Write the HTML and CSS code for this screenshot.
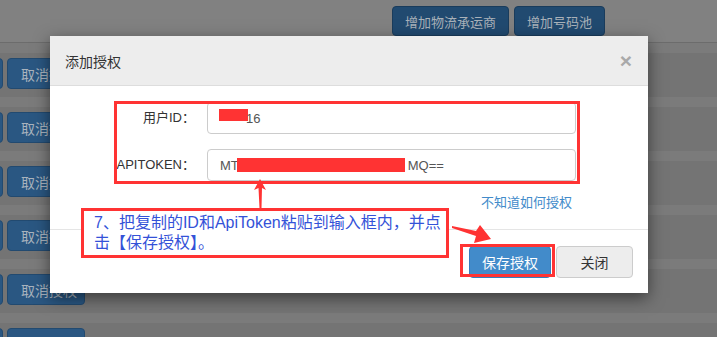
FILE: index.html
```html
<!DOCTYPE html>
<html>
<head>
    <meta charset="utf-8">
    <title>添加授权</title>
    <link rel="stylesheet" href="styles.css">
</head>
<body>
    <div class="page">
        <div class="topbar">
            <span class="btn btn-top">增加物流承运商</span>
            <span class="btn btn-top">增加号码池</span>
        </div>
        <div class="list">
            <div class="row"><span class="btn btn-row btn-cut"></span><span class="btn btn-row">取消授权</span></div>
            <div class="row"><span class="btn btn-row btn-cut"></span><span class="btn btn-row">取消授权</span></div>
            <div class="row"><span class="btn btn-row btn-cut"></span><span class="btn btn-row">取消授权</span></div>
            <div class="row"><span class="btn btn-row btn-cut"></span><span class="btn btn-row">取消授权</span></div>
            <div class="row"><span class="btn btn-row btn-cut"></span><span class="btn btn-row">取消授权</span></div>
            <div class="row"><span class="btn btn-row btn-cut"></span><span class="btn btn-row"></span></div>
        </div>
    </div>

    <div class="modal">
        <div class="modal-header">
            <span class="modal-title">添加授权</span>
            <span class="close">&times;</span>
        </div>
        <div class="modal-body">
            <div class="form-row">
                <label>用户ID：</label>
                <div class="input"><span class="mask mask-id"></span>16</div>
            </div>
            <div class="form-row">
                <label>APITOKEN：</label>
                <div class="input">MT<span class="mask mask-token"></span>MQ==</div>
            </div>
            <div class="help"><a href="#">不知道如何授权</a></div>
        </div>
        <div class="modal-footer">
            <span class="btn btn-primary">保存授权</span>
            <span class="btn btn-default">关闭</span>
        </div>
    </div>

    <!-- annotations drawn over the screenshot -->
    <div class="mark mark-form"></div>
    <div class="mark mark-save"></div>
    <div class="note">7、把复制的ID和ApiToken粘贴到输入框内，并点<br>击【保存授权】。</div>
    <svg class="arrows" width="717" height="337" viewBox="0 0 717 337">
        <polygon points="260,179 266,190 262,188 261.5,208 259.5,208 258.5,188 254,190" fill="#f33"/>
        <polygon points="452,226 476,231 480,225 491,239 474,243 476,236 452,228" fill="#f33"/>
    </svg>
</body>
</html>
```

FILE: styles.css
```css
html {
    height: 100%;
}

body {
    height: 100%;
    margin: 0;
    padding: 0;
    overflow: hidden;
    position: relative;
    background: #747474;
    font-family: "Liberation Sans", "Noto Sans CJK SC", sans-serif;
    font-size: 13px;
    color: #333333;
}

.btn {
    display: inline-flex;
    align-items: center;
    justify-content: center;
    box-sizing: border-box;
    border-radius: 4px;
    font-size: 13px;
    white-space: nowrap;
}

/* page behind the modal (already dimmed) */
.topbar {
    height: 43px;
    box-sizing: border-box;
    padding: 6px 0 0 392px;
    background: #818181;
    border-bottom: 1px solid #6c6c6c;
    display: flex;
    align-items: flex-start;
    gap: 5px;
}

.btn-top {
    height: 30px;
    padding: 0 12px;
    background: #214a70;
    border: 1px solid #1a3c5c;
    color: #a9b1b9;
}

.row {
    height: 54px;
    box-sizing: border-box;
    border-top: 10px solid #7b7b7b;
    padding-top: 5px;
    display: flex;
    align-items: flex-start;
    gap: 4px;
}

.btn-row {
    width: 78px;
    height: 31px;
    background: #2a5782;
    border: 1px solid #224a70;
    color: #a9b3bd;
    justify-content: flex-start;
    padding-left: 13px;
    font-size: 14px;
}

.btn-cut {
    width: 73px;
    margin-left: -70px;
}

/* modal */
.modal {
    position: absolute;
    left: 50px;
    top: 36px;
    width: 598px;
    background: #ffffff;
    box-shadow: 0 5px 15px rgba(0, 0, 0, 0.5);
}

.modal-header {
    height: 50px;
    box-sizing: border-box;
    padding: 0 16px 0 15px;
    background: #ededed;
    border-bottom: 1px solid #dddddd;
    display: flex;
    align-items: center;
    justify-content: space-between;
}

.modal-title {
    font-size: 14px;
    color: #333333;
}

.close {
    font-size: 21px;
    font-weight: bold;
    color: #a9a9a9;
    line-height: 1;
}

.modal-body {
    height: 143px;
    box-sizing: border-box;
    padding-top: 16px;
}

.form-row {
    display: grid;
    grid-template-columns: 145px 369px;
    column-gap: 12px;
    margin-bottom: 15px;
}

.form-row label {
    text-align: right;
    line-height: 32px;
    font-size: 13px;
    color: #333333;
}

.input {
    height: 32px;
    box-sizing: border-box;
    border: 1px solid #cccccc;
    border-radius: 4px;
    padding: 0 12px;
    display: flex;
    align-items: center;
    color: #555555;
    font-size: 13px;
}

.mask {
    display: inline-block;
    background: #ff3333;
}

.mask-id {
    width: 29px;
    height: 12px;
    margin: -6px -2px 0 -1px;
}

.mask-token {
    width: 168px;
    height: 14px;
    margin: 0 3px 0 -2px;
}

.help {
    margin-top: -2px;
    padding-right: 76px;
    text-align: right;
    line-height: 18px;
}

.help a {
    color: #428bca;
    text-decoration: none;
    font-size: 13px;
}

.modal-footer {
    border-top: 1px solid #e5e5e5;
    padding: 16px 15px 15px;
    display: flex;
    justify-content: flex-end;
    gap: 5px;
}

.btn-primary {
    width: 82px;
    height: 32px;
    background: #428bca;
    border: 1px solid #357ebd;
    color: #ffffff;
    font-size: 14px;
}

.btn-default {
    width: 77px;
    height: 32px;
    background: #ededed;
    border: 1px solid #cccccc;
    color: #333333;
    font-size: 14px;
}

/* red annotations */
.mark {
    position: absolute;
    box-sizing: border-box;
    border: 3px solid #ff3333;
}

.mark-form {
    left: 114px;
    top: 101px;
    width: 466px;
    height: 83px;
}

.mark-save {
    left: 460px;
    top: 244px;
    width: 95px;
    height: 33px;
}

.note {
    position: absolute;
    left: 81px;
    top: 208px;
    width: 368px;
    height: 50px;
    box-sizing: border-box;
    border: 3px solid #ff3333;
    background: #ffffff;
    padding: 2px 0 0 10px;
    font-size: 16px;
    line-height: 20px;
    color: #3452d8;
    white-space: nowrap;
}

.arrows {
    position: absolute;
    left: 0;
    top: 0;
}
```
